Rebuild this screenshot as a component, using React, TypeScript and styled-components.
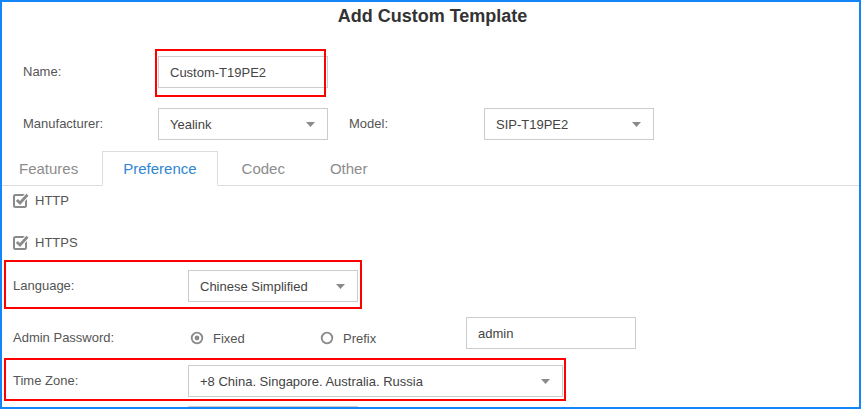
import React from "react";
import styled, { createGlobalStyle } from "styled-components";

const Global = createGlobalStyle`
  html, body { margin: 0; padding: 0; background: #fff; }
  body { font-family: "Liberation Sans", Arial, sans-serif; }
  * { box-sizing: border-box; }
`;

const Frame = styled.div`
  width: 861px;
  height: 409px;
  border: 2px solid #1485f8;
  overflow: hidden;
  background: #fff;
  display: flex;
  flex-direction: column;
`;

const Title = styled.h1`
  margin: 3px 0 0;
  padding-left: 4px;
  font-size: 18px;
  line-height: 22px;
  font-weight: bold;
  color: #333;
  text-align: center;
`;

const TopForm = styled.div`
  display: flex;
  flex-direction: column;
  gap: 20px;
  padding: 29px 0 0 21px;
`;

const FieldRow = styled.div<{ $mt?: number; $align?: string }>`
  display: flex;
  align-items: ${(p) => p.$align || "center"};
  height: 32px;
  margin-top: ${(p) => p.$mt || 0}px;
  position: relative;
  flex-shrink: 0;
`;

const Label = styled.div<{ $w: number; $ml?: number; $pt?: number }>`
  width: ${(p) => p.$w}px;
  margin-left: ${(p) => p.$ml || 0}px;
  padding-top: ${(p) => p.$pt || 0}px;
  flex-shrink: 0;
  font-size: 13px;
  line-height: 16px;
  color: #555;
`;

const Box = styled.div<{ $w: number }>`
  width: ${(p) => p.$w}px;
  height: 32px;
  flex-shrink: 0;
  border: 1px solid #ccc;
  background: #fff;
  padding: 0 12px 0 11px;
  display: flex;
  align-items: center;
  font-size: 13px;
  color: #444;
`;

const Arrow = styled.svg`
  margin-left: auto;
  flex-shrink: 0;
`;

const Anchor = styled.div`
  position: relative;
`;

const Mark = styled.div<{ $t: number; $l: number; $w: number; $h: number }>`
  position: absolute;
  top: ${(p) => p.$t}px;
  left: ${(p) => p.$l}px;
  width: ${(p) => p.$w}px;
  height: ${(p) => p.$h}px;
  border: 2px solid #f00;
  pointer-events: none;
`;

const TabBar = styled.div`
  display: flex;
  align-items: flex-start;
  margin: 11px 0 0 -4px;
  height: 35px;
  border-bottom: 1px solid #ddd;
  flex-shrink: 0;
`;

const Tab = styled.div<{ $active?: boolean }>`
  height: ${(p) => (p.$active ? 35 : 34)}px;
  margin-right: 3px;
  padding: 0 20px;
  border: 1px solid ${(p) => (p.$active ? "#ddd" : "transparent")};
  border-bottom: ${(p) => (p.$active ? "1px solid #fff" : "none")};
  background: ${(p) => (p.$active ? "#fff" : "transparent")};
  font-size: 15px;
  line-height: 33px;
  color: ${(p) => (p.$active ? "#2f86d2" : "#8c8c8c")};
`;

const TabContent = styled.div`
  display: flex;
  flex-direction: column;
  padding-left: 11px;
`;

const CheckRow = styled.div<{ $mt: number }>`
  display: flex;
  align-items: center;
  gap: 6px;
  height: 16px;
  margin-top: ${(p) => p.$mt}px;
  font-size: 13px;
  color: #555;
  flex-shrink: 0;
`;

const RadioGroup = styled.div`
  display: flex;
  width: 278px;
  padding-top: 13px;
  flex-shrink: 0;
`;

const RadioOption = styled.div`
  display: flex;
  align-items: center;
  gap: 9px;
  width: 130px;
  height: 16px;
  padding-left: 2px;
  font-size: 13px;
  color: #555;
`;

const SelectArrow = () => (
  <Arrow width="9" height="5" viewBox="0 0 9 5">
    <polygon points="0,0 9,0 4.5,5" fill="#8a8a8a" />
  </Arrow>
);

const Select = ({ w, value }: { w: number; value?: string }) => (
  <Box $w={w}>
    {value}
    <SelectArrow />
  </Box>
);

const CheckIcon = () => (
  <svg width="16" height="16" viewBox="0 0 16 16">
    <rect x="1" y="3" width="12" height="12" rx="1.5" fill="none" stroke="#8a8a8a" strokeWidth="2" />
    <path d="M3.8 8 L7 11 L14.5 2.8" fill="none" stroke="#fff" strokeWidth="5" strokeLinejoin="round" />
    <path d="M3.8 8 L7 11 L14.5 2.8" fill="none" stroke="#8a8a8a" strokeWidth="2.8" />
  </svg>
);

const RadioIcon = ({ checked }: { checked?: boolean }) => (
  <svg width="14" height="14" viewBox="0 0 14 14">
    <circle cx="7" cy="7" r="5.3" fill="none" stroke="#8a8a8a" strokeWidth="1.8" />
    {checked && <circle cx="7" cy="7" r="2.4" fill="#8a8a8a" />}
  </svg>
);

export default function App() {
  return (
    <>
      <Global />
      <Frame>
        <Title>Add Custom Template</Title>
        <TopForm>
          <FieldRow>
            <Label $w={135}>Name:</Label>
            <Anchor>
              <Box $w={170}>Custom-T19PE2</Box>
              <Mark $t={-7} $l={-3} $w={171} $h={48} />
            </Anchor>
          </FieldRow>
          <FieldRow>
            <Label $w={135}>Manufacturer:</Label>
            <Select w={170} value="Yealink" />
            <Label $w={135} $ml={21}>Model:</Label>
            <Select w={170} value="SIP-T19PE2" />
          </FieldRow>
        </TopForm>
        <TabBar>
          <Tab>Features</Tab>
          <Tab $active>Preference</Tab>
          <Tab>Codec</Tab>
          <Tab>Other</Tab>
        </TabBar>
        <TabContent>
          <CheckRow $mt={6}>
            <CheckIcon />
            HTTP
          </CheckRow>
          <CheckRow $mt={26}>
            <CheckIcon />
            HTTPS
          </CheckRow>
          <FieldRow $mt={20}>
            <Label $w={175}>Language:</Label>
            <Select w={170} value="Chinese Simplified" />
            <Mark $t={-10} $l={-9} $w={358} $h={49} />
          </FieldRow>
          <FieldRow $mt={15} $align="flex-start">
            <Label $w={175} $pt={13}>Admin Password:</Label>
            <RadioGroup>
              <RadioOption>
                <RadioIcon checked />
                Fixed
              </RadioOption>
              <RadioOption>
                <RadioIcon />
                Prefix
              </RadioOption>
            </RadioGroup>
            <Box $w={170}>admin</Box>
          </FieldRow>
          <FieldRow $mt={16}>
            <Label $w={175}>Time Zone:</Label>
            <Select w={375} value="+8 China. Singapore. Australia. Russia" />
            <Mark $t={-7} $l={-9} $w={562} $h={43} />
          </FieldRow>
          <FieldRow $mt={9}>
            <Label $w={175} />
            <Select w={170} />
          </FieldRow>
        </TabContent>
      </Frame>
    </>
  );
}
